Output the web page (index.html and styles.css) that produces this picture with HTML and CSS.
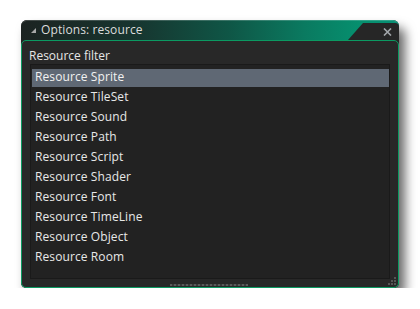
FILE: index.html
```html
<!DOCTYPE html>
<html>
<head>
<meta charset="utf-8">
<link rel="stylesheet" href="styles.css">
</head>
<body>
<div class="window">
  <div class="titlebar">
    <span class="tri"></span>
    <span class="title">Options: resource</span>
    <div class="tab">
      <svg class="close" width="9" height="8" viewBox="0 0 9 8"><path d="M1 0.5 L8 7.5 M8 0.5 L1 7.5" stroke="#a3a7ab" stroke-width="1.6"/></svg>
    </div>
  </div>
  <div class="panel">
    <div class="label">Resource filter</div>
    <ul class="list">
      <li class="row selected">Resource Sprite</li>
      <li class="row">Resource TileSet</li>
      <li class="row">Resource Sound</li>
      <li class="row">Resource Path</li>
      <li class="row">Resource Script</li>
      <li class="row">Resource Shader</li>
      <li class="row">Resource Font</li>
      <li class="row">Resource TimeLine</li>
      <li class="row">Resource Object</li>
      <li class="row">Resource Room</li>
    </ul>
    <div class="grip"></div>
    <svg class="corner" width="9" height="9" viewBox="0 0 9 9">
      <rect x="6" y="0" width="2" height="2" fill="#555"/>
      <rect x="3" y="3" width="2" height="2" fill="#555"/>
      <rect x="6" y="3" width="2" height="2" fill="#555"/>
      <rect x="0" y="6" width="2" height="2" fill="#555"/>
      <rect x="3" y="6" width="2" height="2" fill="#555"/>
      <rect x="6" y="6" width="2" height="2" fill="#555"/>
    </svg>
  </div>
</div>
</body>
</html>
```
FILE: styles.css
```css
html, body {
  margin: 0;
  padding: 0;
  background: #ffffff;
}
body {
  font-family: "Open Sans", "Noto Sans", sans-serif;
  font-size: 12px;
  color: #e4e4e4;
}
.window {
  margin: 20px 0 0 21px;
  width: 378px;
  background: #242424;
  border-radius: 6px 6px 5px 5px;
  box-shadow: 6px 8px 11px rgba(0,0,0,0.6);
}
.titlebar {
  height: 20px;
  display: flex;
  align-items: center;
  padding-left: 10px;
  border-radius: 6px 6px 0 0;
  background: linear-gradient(to right, #1c2321 0%, #17352f 30%, #0f5646 55%, #0a7a60 75%, #06906f 90%, #079074 100%);
  box-shadow: inset 0 1px 0 rgba(255,255,255,0.18);
}
.tri {
  width: 0;
  height: 0;
  border-left: 5px solid transparent;
  border-bottom: 5px solid #a8a8a8;
  margin-right: 5px;
  margin-top: 1px;
}
.title {
  color: #dcdcdc;
  line-height: 16px;
  margin-top: -1px;
  letter-spacing: 0.1px;
}
.tab {
  margin-left: auto;
  align-self: flex-end;
  width: 51px;
  height: 17px;
  background: #262626;
  clip-path: polygon(15px 0, 100% 0, 100% 100%, 0 100%);
  border-top-right-radius: 4px;
  display: flex;
  align-items: center;
  justify-content: flex-end;
  padding-right: 7px;
  box-sizing: border-box;
}
.close {
  display: block;
  margin-top: 1px;
}
.panel {
  position: relative;
  height: 248px;
  box-sizing: border-box;
  border: 1px solid #0b9a62;
  border-radius: 5px;
  background: #282828;
  padding: 7px 0 0 7px;
}
.label {
  line-height: 16px;
  height: 16px;
  color: #e6e6e6;
}
.list {
  list-style: none;
  margin: 0 0 0 1px;
  padding: 4px 0 0 1px;
  width: 360px;
  height: 215px;
  box-sizing: border-box;
  background: #222222;
  border: 1px solid #1a1a1a;
}
.row {
  height: 18px;
  line-height: 15px;
  margin-bottom: 2px;
  padding-left: 3px;
  color: #e8e8e8;
  white-space: nowrap;
  letter-spacing: 0.1px;
}
.row.selected {
  background: #5f6874;
  color: #f2f2f2;
}
.grip {
  width: 78px;
  height: 2px;
  margin: 5px 0 0 141px;
  background: repeating-linear-gradient(to right, #5a5a5a 0, #5a5a5a 2px, #3a3a3a 2px, #3a3a3a 4px);
}
.corner {
  position: absolute;
  right: 1px;
  bottom: 1px;
}
```
